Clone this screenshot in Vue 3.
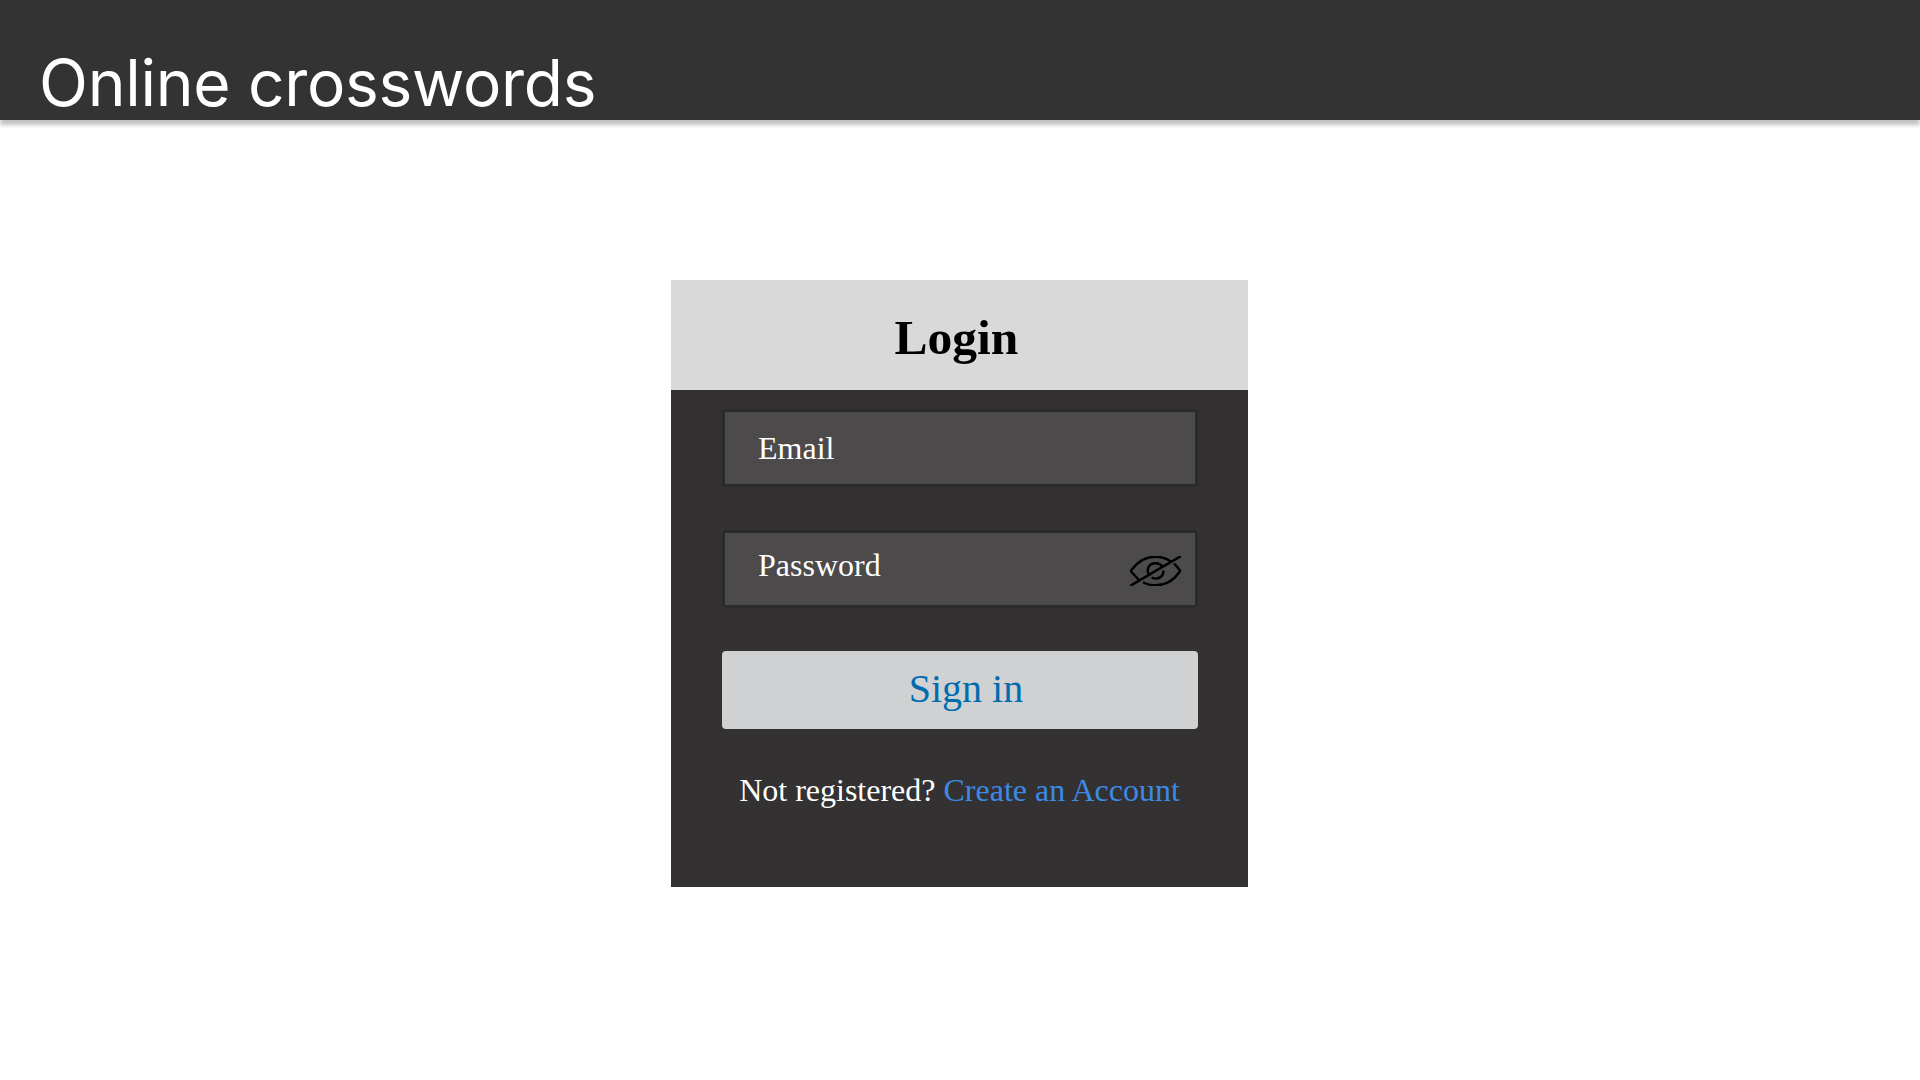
<script setup>
import { ref } from 'vue'

const email = ref('')
const password = ref('')
</script>

<template>
  <div class="page">
    <header class="topbar">
      <h1 class="brand">Online crosswords</h1>
    </header>
    <main class="main">
      <section class="card">
        <div class="card-head">
          <h2 class="card-title">Login</h2>
        </div>
        <form class="form" @submit.prevent>
          <div class="field">
            <input v-model="email" class="input" type="email" placeholder="Email" />
          </div>
          <div class="field password">
            <input v-model="password" class="input" type="password" placeholder="Password" />
            <svg class="eye" viewBox="0 0 51 30" width="51" height="30" fill="none" stroke="#000" stroke-width="2.4">
              <path d="M9.500 24.500L1.500 16Q0.600 15 1.500 14C7.500 5.500 15.500 0.700 25.500 0.700C31.500 0.700 37 2.500 41.500 5.700" />
              <path d="M44 7.700C46 9.500 48 11.800 49.500 14Q50.300 15 49.500 16C43.500 24.500 36 29.300 25.500 29.300C21 29.300 16.500 28.300 13 26.300" />
              <path d="M20 19.800C15.500 15 18 7.300 25.500 7.300C28.500 7.300 31 8.700 32.200 10.500" />
              <path d="M33.400 14.500C33.800 19.500 30 22.600 26 22.600C24.300 22.600 22.800 22.200 21.600 21.400" />
              <path d="M-0.500 30.300L51.500 -0.300" />
            </svg>
          </div>
          <button class="submit" type="submit">Sign in</button>
          <p class="signup">Not registered? <a class="link">Create an Account</a></p>
        </form>
      </section>
    </main>
  </div>
</template>

<style>
body {
  background: #fff;
}
</style>

<style scoped>
.page {
  height: 1080px;
  overflow: hidden;
  font-family: "Liberation Serif", "Times New Roman", serif;
}
.topbar {
  box-sizing: border-box;
  height: 120px;
  padding: 44px 0 0 39px;
  background: #333;
  box-shadow: 0 5px 4px rgba(0, 0, 0, 0.24);
}
.brand {
  margin: 0;
  color: #fff;
  font: 400 64px/77px Inter, sans-serif;
  letter-spacing: -0.28px;
  white-space: nowrap;
}
.main {
  padding: 160px 0 0 671px;
}
.card {
  width: 577px;
  height: 607px;
  background: #333132;
}
.card-head {
  box-sizing: border-box;
  height: 110px;
  padding: 29px 6px 0 0;
  background: #d9d9d9;
  text-align: center;
}
.card-title {
  margin: 0;
  color: #000;
  font-size: 49.5px;
  line-height: 58px;
}
.form {
  display: flex;
  flex-direction: column;
  padding: 19px 50px 0 51px;
}
.field {
  box-sizing: border-box;
  display: flex;
  height: 78px;
  margin-bottom: 43px;
  padding: 0 12px 0 33px;
  border: 3px solid #2b2b2b;
  border-radius: 4px;
  background: #4c4a4b;
}
.input {
  flex: 1;
  min-width: 0;
  height: 37px;
  margin-top: 18px;
  padding: 0;
  border: 0;
  outline: 0;
  background: none;
  color: #fff;
  font: 32px/37px "Liberation Serif", serif;
}
.input::placeholder {
  color: #fff;
  opacity: 1;
}
.password .input {
  margin-top: 14px;
}
.eye {
  margin: 23px 2px 0 0;
}
.submit {
  height: 78px;
  padding: 0 0 2px 12px;
  border: 0;
  border-radius: 4px;
  background: #d0d1d3;
  color: #006cb0;
  font: 40px/46px "Liberation Serif", serif;
}
.signup {
  margin: 43px 0 0;
  padding-right: 1px;
  color: #fff;
  font-size: 32px;
  line-height: 37px;
  text-align: center;
  white-space: nowrap;
}
.link {
  color: #3c8ae5;
}
</style>
